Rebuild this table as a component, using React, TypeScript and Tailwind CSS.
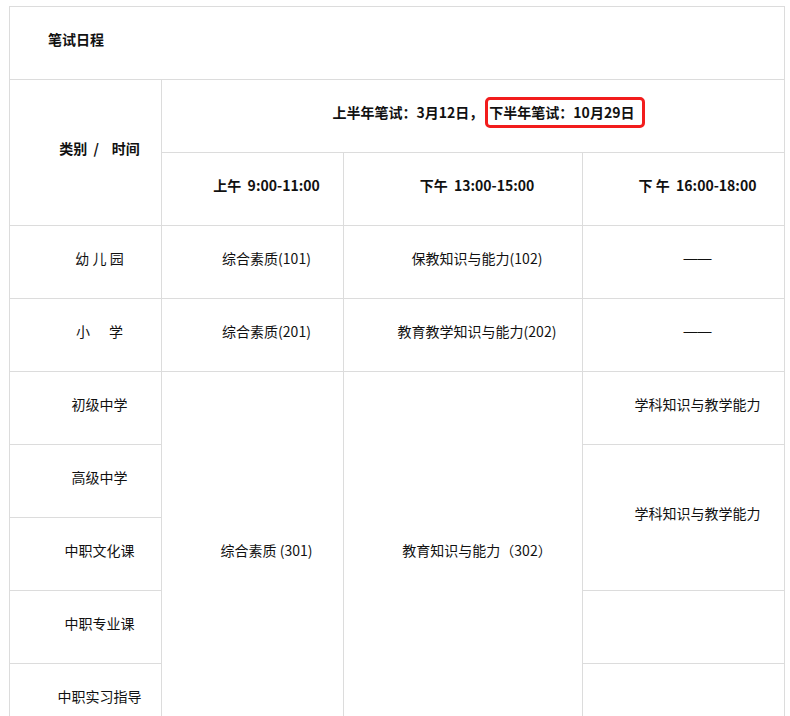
import React from "react";

const cell =
  "border border-[#dcdcdc] text-center align-middle pl-[38px] pr-[10px] pt-0 pb-[8px] h-[73px]";

const Dash = () => (
  <span style={{ fontFamily: '"Liberation Sans", sans-serif' }}>——</span>
);

export default function App() {
  return (
    <div
      className="w-[790px] min-h-[716px] bg-white pl-[9px] pt-[6px] text-[14px] text-[#111]"
      style={{ fontFamily: '"Noto Sans CJK SC", "Noto Sans", sans-serif' }}
    >
      <table className="border-collapse table-fixed w-[775px]">
        <colgroup>
          <col className="w-[152px]" />
          <col className="w-[182px]" />
          <col className="w-[239px]" />
          <col className="w-[202px]" />
        </colgroup>
        <tbody>
          <tr>
            <td colSpan={4} className="border border-[#dcdcdc] h-[73px] pl-[38px] pt-0 pb-[8px] text-left align-middle font-bold">
              笔试日程
            </td>
          </tr>
          <tr>
            <td rowSpan={2} className={cell + " font-bold"}>
              类别&nbsp;&nbsp;/&nbsp;&nbsp;&nbsp;&nbsp;时间
            </td>
            <td colSpan={3} className={cell + " font-bold"}>
              <span className="pl-[4px]">上半年笔试：3月12日，</span>
              <span className="inline-block border-[3px] border-[#f21d1d] rounded-[5px] ml-[2px] pl-[1px] pr-[8px] leading-[25px] -my-[3px]">
                下半年笔试：10月29日
              </span>
            </td>
          </tr>
          <tr>
            <td className={cell + " font-bold"}>上午&nbsp;&nbsp;9:00-11:00</td>
            <td className={cell + " font-bold"}>下午&nbsp;&nbsp;13:00-15:00</td>
            <td className={cell + " font-bold"}>下&nbsp;午&nbsp;&nbsp;16:00-18:00</td>
          </tr>
          <tr>
            <td className={cell}>幼&nbsp;儿&nbsp;园</td>
            <td className={cell}>综合素质(101)</td>
            <td className={cell}>保教知识与能力(102)</td>
            <td className={cell}><Dash /></td>
          </tr>
          <tr>
            <td className={cell}>小&nbsp;&nbsp;&nbsp;&nbsp;&nbsp;&nbsp;学</td>
            <td className={cell}>综合素质(201)</td>
            <td className={cell}>教育教学知识与能力(202)</td>
            <td className={cell}><Dash /></td>
          </tr>
          <tr>
            <td className={cell}>初级中学</td>
            <td rowSpan={5} className={cell}>综合素质 (301)</td>
            <td rowSpan={5} className={cell}>教育知识与能力（302）</td>
            <td className={cell}>学科知识与教学能力</td>
          </tr>
          <tr>
            <td className={cell}>高级中学</td>
            <td rowSpan={2} className={cell}>学科知识与教学能力</td>
          </tr>
          <tr>
            <td className={cell}>中职文化课</td>
          </tr>
          <tr>
            <td className={cell}>中职专业课</td>
            <td className={cell}></td>
          </tr>
          <tr>
            <td className={cell}>中职实习指导</td>
            <td className={cell}></td>
          </tr>
        </tbody>
      </table>
    </div>
  );
}
